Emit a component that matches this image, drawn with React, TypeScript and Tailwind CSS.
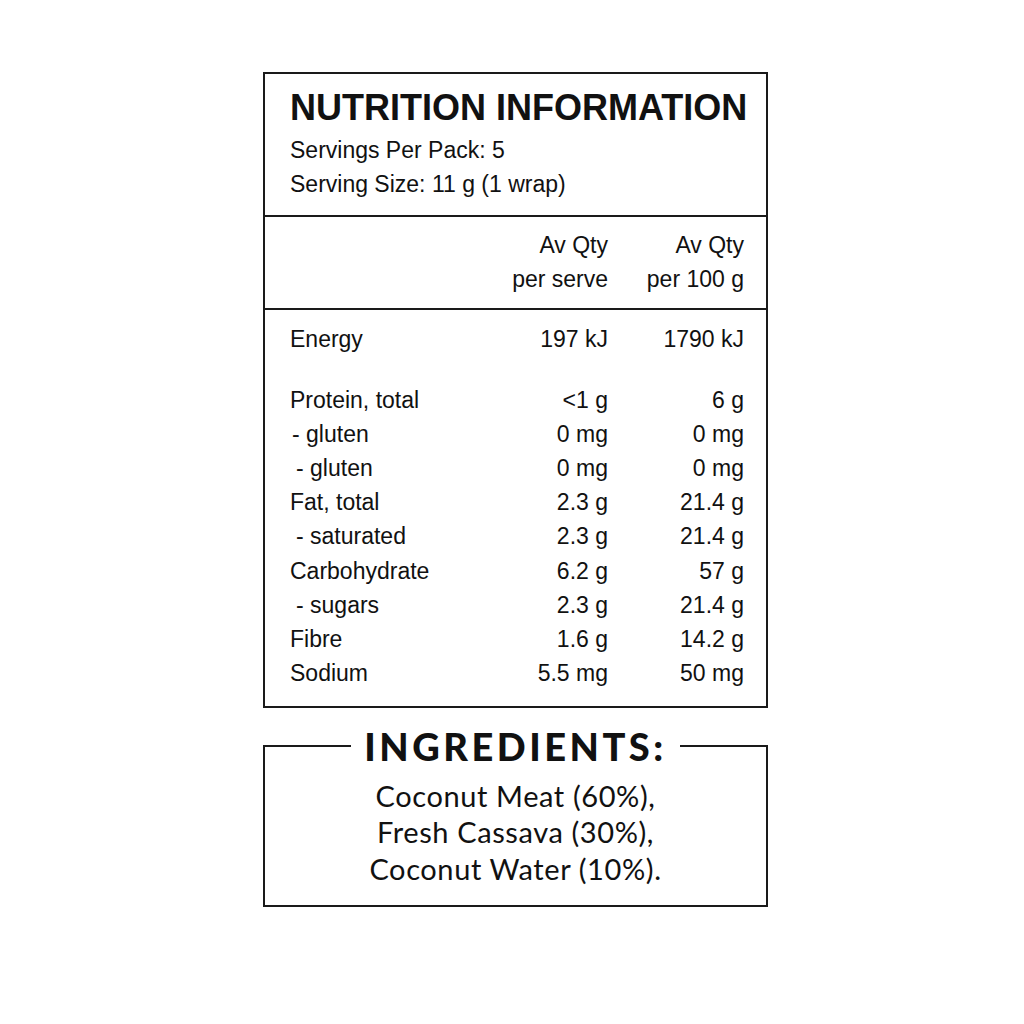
const rows: { label: string; indent?: number; serve: string; per100: string }[] = [
  { label: 'Protein, total', serve: '<1 g', per100: '6 g' },
  { label: '- gluten', indent: 1, serve: '0 mg', per100: '0 mg' },
  { label: '- gluten', indent: 2, serve: '0 mg', per100: '0 mg' },
  { label: 'Fat, total', serve: '2.3 g', per100: '21.4 g' },
  { label: '- saturated', indent: 2, serve: '2.3 g', per100: '21.4 g' },
  { label: 'Carbohydrate', serve: '6.2 g', per100: '57 g' },
  { label: '- sugars', indent: 2, serve: '2.3 g', per100: '21.4 g' },
  { label: 'Fibre', serve: '1.6 g', per100: '14.2 g' },
  { label: 'Sodium', serve: '5.5 mg', per100: '50 mg' },
];

function Row({ label, indent, serve, per100 }: { label: string; indent?: number; serve: string; per100: string }) {
  return (
    <div className="grid grid-cols-[1fr_130px_136px] h-[34.1px] items-center">
      <span className={indent === 1 ? 'pl-[2px]' : indent === 2 ? 'pl-[6px]' : ''}>{label}</span>
      <span className="text-right">{serve}</span>
      <span className="text-right">{per100}</span>
    </div>
  );
}

export default function App() {
  return (
    <div className="min-h-screen bg-white flex flex-col items-center pt-[72px] pl-[7px] text-[#111]">
      {/* Nutrition panel */}
      <div className="w-[505px] border-2 border-[#1a1a1a] [font-family:'Liberation_Sans',Arial,sans-serif] text-[23px] leading-[34px]">
        <div className="pl-[25px] pr-[22px] pt-[14px] pb-[14px] border-b-2 border-[#1a1a1a]">
          <h1 className="text-[36px] leading-[40px] font-bold whitespace-nowrap">NUTRITION INFORMATION</h1>
          <p className="mt-[5px]">Servings Per Pack: 5</p>
          <p>Serving Size: 11 g (1 wrap)</p>
        </div>

        <div className="grid grid-cols-[1fr_130px_136px] pl-[25px] pr-[22px] pt-[11px] pb-[12px] border-b-2 border-[#1a1a1a]">
          <span />
          <span className="text-right">Av Qty<br />per serve</span>
          <span className="text-right">Av Qty<br />per 100 g</span>
        </div>

        <div className="pl-[25px] pr-[22px] pt-[12px] pb-[16px]">
          <div className="grid grid-cols-[1fr_130px_136px] h-[34px] items-center">
            <span>Energy</span>
            <span className="text-right">197 kJ</span>
            <span className="text-right">1790 kJ</span>
          </div>
          <div className="mt-[27px]">
            {rows.map((r, i) => (
              <Row key={i} {...r} />
            ))}
          </div>
        </div>
      </div>

      {/* Ingredients */}
      <fieldset className="w-[505px] mt-[18px] border-2 border-[#1a1a1a] pb-[18px] [font-family:Lato,sans-serif] text-center">
        <legend className="mx-auto px-[13px] text-[38px] leading-[40px] font-black tracking-[3.5px]">INGREDIENTS:</legend>
        <div className="text-[29px] leading-[36.5px] mt-[12px] tracking-[0.6px]">
          <p>Coconut Meat (60%),</p>
          <p>Fresh Cassava (30%),</p>
          <p>Coconut Water (10%).</p>
        </div>
      </fieldset>
    </div>
  );
}
